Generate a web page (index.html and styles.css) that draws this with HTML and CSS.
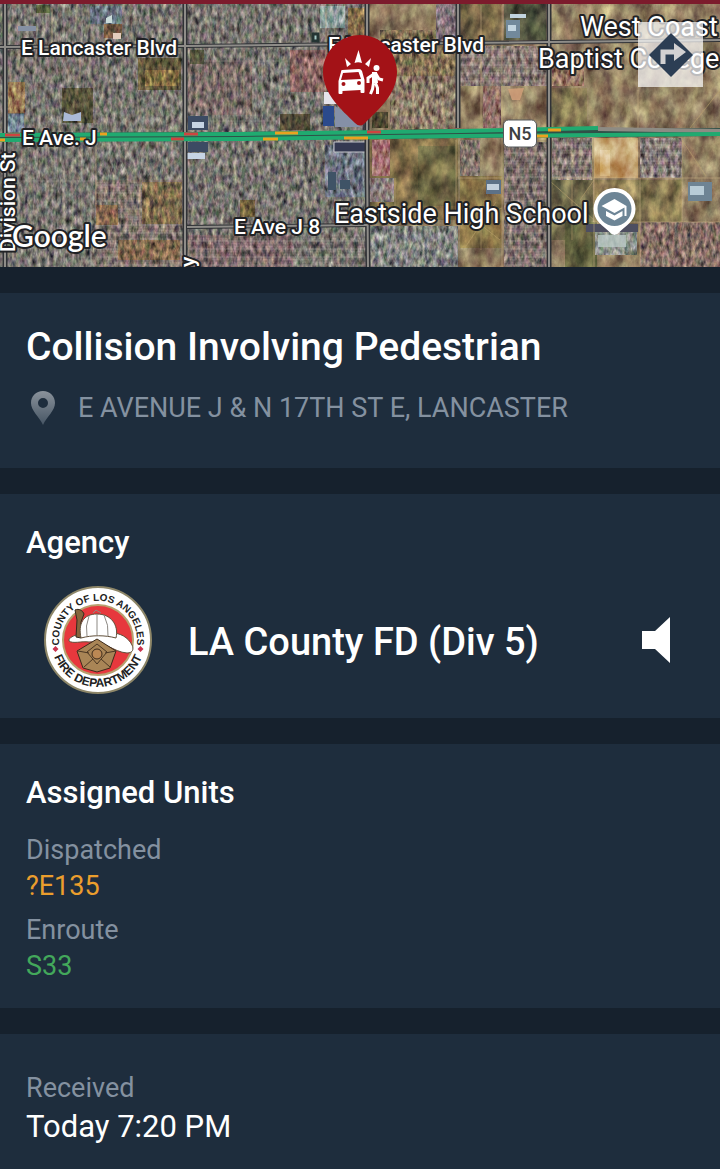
FILE: index.html
```html
<!DOCTYPE html>
<html lang="en">
<head>
  <meta charset="UTF-8">
  <meta name="viewport" content="width=device-width, initial-scale=1.0">
  <title>Incident Details</title>
  <link rel="stylesheet" href="styles.css">
</head>
<body>
  <header class="map">
    <svg class="map-canvas" viewBox="0 4 720 263" preserveAspectRatio="xMidYMid slice" role="img" aria-label="Incident map">
      <defs>
        <filter id="city" x="0" y="0" width="100%" height="100%" color-interpolation-filters="sRGB">
          <feTurbulence type="fractalNoise" baseFrequency="0.24 0.12" numOctaves="3" seed="4"/>
          <feColorMatrix values=".8 .4 .1 0 -.15  .6 .6 .1 0 -.15  .6 .4 .3 0 -.14  0 0 0 0 1" result="noise"/>
          <feBlend in="noise" in2="SourceGraphic" mode="overlay"/>
          <feComposite in2="SourceGraphic" operator="in"/>
        </filter>
        <filter id="field" x="0" y="0" width="100%" height="100%" color-interpolation-filters="sRGB">
          <feTurbulence type="fractalNoise" baseFrequency="0.08 0.05" numOctaves="5" seed="9"/>
          <feColorMatrix values=".6 .4 0 0 0  .5 .5 0 0 0  .5 .4 .1 0 0  0 0 0 0 1" result="noise"/>
          <feBlend in="noise" in2="SourceGraphic" mode="overlay"/>
          <feComposite in2="SourceGraphic" operator="in"/>
        </filter>
        <pattern id="streets" width="9" height="60" patternUnits="userSpaceOnUse">
          <path d="M1 0V60M0 1H9" stroke="#c9c4ba" stroke-width="1" opacity=".28"/>
          <path d="M5 0V60" stroke="#2f3029" stroke-width="1" opacity=".25"/>
        </pattern>
        <pattern id="rows" width="50" height="8" patternUnits="userSpaceOnUse">
          <path d="M0 1H50M1 0V8" stroke="#d0c8bc" stroke-width="1" opacity=".28"/>
          <path d="M0 5H50" stroke="#33302c" stroke-width="1" opacity=".25"/>
        </pattern>
      </defs>

      <!-- open land -->
      <g filter="url(#field)">
        <rect y="4" width="720" height="263" fill="#8e7b5f"/>
        <rect x="368" y="138" width="90" height="82" fill="#7d6b47"/>
        <rect x="418" y="146" width="38" height="60" fill="#6a6442"/>
        <rect x="460" y="176" width="42" height="72" fill="#867247"/>
        <rect x="551" y="180" width="42" height="60" fill="#6d6749"/>
        <rect x="594" y="180" width="88" height="42" fill="#80734e"/>
        <rect x="565" y="222" width="32" height="45" fill="#5f5f3e"/>
        <rect x="504" y="4" width="42" height="36" fill="#5b5d46"/>
        <rect x="460" y="4" width="42" height="38" fill="#7b6a4a"/>
        <rect x="551" y="88" width="36" height="40" fill="#837651"/>
        <rect x="594" y="138" width="44" height="40" fill="#c4a372"/>
        <rect x="600" y="150" width="10" height="26" fill="#d8b985"/>
      </g>

      <!-- built-up blocks -->
      <g filter="url(#city)">
        <rect y="4" width="367" height="263" fill="#77746c"/>
        <rect x="8" y="50" width="90" height="30" fill="#756f68"/>
        <rect x="60" y="100" width="120" height="34" fill="#77756b"/>
        <rect x="95" y="180" width="88" height="87" fill="#7f736a"/>
        <rect x="188" y="235" width="105" height="32" fill="#7d6a68"/>
        <rect x="290" y="50" width="36" height="42" fill="#876660"/>
        <rect x="188" y="60" width="64" height="55" fill="#796b64"/>
        <rect x="390" y="75" width="66" height="54" fill="#8a7a66"/>
        <rect x="380" y="30" width="76" height="46" fill="#837153"/>
        <rect x="436" y="4" width="20" height="38" fill="#84757a"/>
        <rect x="368" y="226" width="90" height="41" fill="#7f817c"/>
        <rect x="372" y="140" width="18" height="36" fill="#a16f6d"/>
        <rect x="368" y="178" width="26" height="24" fill="#897d78"/>
        <rect x="460" y="46" width="88" height="40" fill="#86776f"/>
        <rect x="483" y="86" width="18" height="42" fill="#927167"/>
        <rect x="460" y="140" width="20" height="36" fill="#817468"/>
        <rect x="504" y="142" width="44" height="125" fill="#7d7069"/>
        <rect x="552" y="138" width="40" height="42" fill="#84776f"/>
        <rect x="640" y="138" width="42" height="40" fill="#857a75"/>
        <rect x="552" y="60" width="32" height="26" fill="#94745f"/>
        <rect x="640" y="222" width="80" height="45" fill="#846e63"/>
        <rect x="595" y="225" width="42" height="30" fill="#8d9388"/>
      </g>
      <path d="M8 144H95V267H8zM8 8H98V44H8zM188 8H326V42H188zM188 50H280V128H188z" fill="url(#streets)"/>
      <path d="M96 180H183V267H96zM188 235H366V267H188zM504 140H548V267H504zM552 138H592V178H552zM640 138H682V178H640zM460 46H548V84H460z" fill="url(#rows)"/>

      <!-- parks, lots and large roofs -->
      <g filter="url(#city)">
        <rect x="8" y="82" width="17" height="31" fill="#9a7c55"/>
        <rect x="8" y="114" width="16" height="18" fill="#71818f"/>
        <rect x="62" y="88" width="31" height="35" fill="#56523a"/>
        <rect x="138" y="58" width="43" height="32" fill="#5f563a"/>
        <rect x="145" y="70" width="34" height="16" fill="#857143"/>
        <rect x="104" y="22" width="18" height="16" fill="#705940"/>
        <rect x="90" y="6" width="32" height="18" fill="#68757c"/>
        <rect x="36" y="5" width="14" height="8" fill="#505a3b"/>
        <rect x="190" y="50" width="14" height="14" fill="#54553c"/>
        <rect x="96" y="205" width="22" height="20" fill="#82654a"/>
        <rect x="142" y="182" width="40" height="42" fill="#7d6b4c"/>
        <rect x="118" y="240" width="62" height="20" fill="#82694d"/>
        <rect x="348" y="8" width="18" height="28" fill="#846c49"/>
        <rect x="280" y="114" width="30" height="16" fill="#514a36"/>
        <rect x="372" y="112" width="16" height="16" fill="#504a31"/>
        <rect x="240" y="200" width="15" height="17" fill="#6b5b3a"/>
        <rect x="325" y="145" width="41" height="52" fill="#6d747e"/>
        <rect x="320" y="6" width="25" height="22" fill="#8b9d98"/>
      </g>
      <g>
        <path d="M64 112l8 3 9-3v9H63z" fill="#aab9d6"/>
        <path d="M188 116h20v14h-20zM188 142h20v10h-20z" fill="#3c4b63"/>
        <path d="M192 122h12v6h-12zM187 153h18v6h-18z" fill="#c6d4e4"/>
        <path d="M18 26h18v5H18z" fill="#8590a3"/>
        <path d="M106 18l6-3v8h-6z" fill="#cbdcda"/>
        <path d="M113 33h8v6h-8z" fill="#e3ccbc"/>
        <path d="M324 92h16l4 12h-20z" fill="#e5e3ea"/>
        <path d="M323 106h11v20h-11z" fill="#2b4a8c"/>
        <path d="M335 106l25 17v4h-25z" fill="#8590a7"/>
        <path d="M334 142h32v10h-32z" fill="#343951" stroke="#c5c7cb"/>
        <path d="M328 172h8v18h-8zM340 180h10v9h-10z" fill="#3f5366"/>
        <path d="M313 34h5v7h-5z" fill="#a7c9c6" stroke="#243433" stroke-width="3"/>
        <path d="M506 20h14v18h-14z" fill="#72899b"/>
        <path d="M508 25h8v6h-8zM510 14h16v4h-16z" fill="#c2d4df"/>
        <path d="M486 180h15v14h-15z" fill="#5d7187"/>
        <path d="M487 184h12v6h-12z" fill="#c3d0dd"/>
        <path d="M688 182h24v19h-24z" fill="#6e8494"/>
        <path d="M690 186h14v9h-14z" fill="#b8ccd7"/>
        <path d="M586 224h52v8h-52z" fill="#4d4e60"/>
        <path d="M598 235h28v12h-28z" fill="#bac9c5" opacity=".8"/>
        <path d="M508 89l16-1-4 12h-8z" fill="#d6a27c" opacity=".8"/>
      </g>
      <!-- dirt tracks -->
      <path d="M481 5V128M502 5V267M594 138V267M551 178H720M682 138V222M594 222H720M458 178H502M96 140V204M140 178V226M395 178V222M638 90V128M640 178V267M52 8V44M80 45V86M326 8V92M413 90V130M456 140V220" fill="none" stroke="#c9ae84" stroke-width="1" opacity=".55"/>
      <path d="M460 225L502 208M462 210L500 240M466 246L496 202M481 200V250M551 182L594 220M572 180V240M594 180L580 200M682 140L706 176M720 90L690 128" fill="none" stroke="#c0a670" stroke-width="1" opacity=".5"/>

      <!-- roads -->
      <g fill="none" stroke="#303236" stroke-width="5">
        <path d="M5 4V267M185 4V267M367 4V155L368 267M458 4V128M549 4V267"/>
        <path d="M0 47L185 46L367 44L720 40M187 227L367 225" stroke-width="4"/>
      </g>
      <g fill="none" stroke="#8e8c88" stroke-width="2">
        <path d="M5 4V267M185 4V267M367 4V155L368 267M458 4V128M549 4V267"/>
        <path d="M0 47L185 46L367 44L720 40M187 227L367 225"/>
      </g>

      <!-- live traffic -->
      <path d="M0 137L240 136L460 134L720 132" fill="none" stroke="#2f5148" stroke-width="8"/>
      <g fill="none" stroke-width="4">
        <path d="M0 135L240 134L460 131L598 128" stroke="#20aa70"/>
        <path d="M598 129L720 131" stroke="#8d8b84"/>
        <path d="M0 140L240 139L460 136L720 134" stroke="#20aa70"/>
      </g>
      <g fill="none" stroke-width="3">
        <path d="M5 135H20M184 134H198M171 139H184M367 132H381" stroke="#cf4340"/>
        <path d="M100 134H107M275 133H298M263 139H278M344 138H368M548 130H561M537 136H548M0 140H5M80 139H86" stroke="#eca11f"/>
      </g>

      <!-- labels -->
      <g class="map-label street">
        <text x="21" y="55">E Lancaster Blvd</text>
        <text x="328" y="52">E Lancaster Blvd</text>
        <text x="22" y="145">E Ave. J</text>
        <text x="234" y="234">E Ave J 8</text>
        <text transform="translate(15 252) rotate(-90)">Division St</text>
        <text transform="translate(195 267) rotate(-90)">y</text>
      </g>
      <g class="map-label place">
        <text x="580" y="36">West Coast</text>
        <text x="538" y="68">Baptist College</text>
        <text x="334" y="223">Eastside High School</text>
      </g>
      <text class="map-label google" x="12" y="247">Google</text>

      <rect x="503.500" y="120" width="33" height="27" rx="5" fill="#fff" stroke="#55585a"/>
      <text class="route" x="520" y="140">N5</text>

      <!-- school marker -->
      <path d="M614.500 188a21 21 0 0 0-21 21c0 12 10 17 16 23q5 6 10 0c6-6 16-11 16-23a21 21 0 0 0-21-21z" fill="#fff"/>
      <circle cx="614.500" cy="209" r="17" fill="#6d8596"/>
      <path d="M614.500 199l-13 7 13 7 10-5.500V216h2v-10zM606 211v5l8.500 4.500 8-4.500v-5l-8 4.500z" fill="#fff"/>

      <!-- incident marker -->
      <path d="M360 35c-21 0-37 17-37 37 0 22 19 38 32 51q5 5 10 0c13-13 32-29 32-51 0-20-16-37-37-37z" fill="#a31217"/>
      <g fill="#fff">
        <path d="M358.500 50l3.500 13q-4-1.500-7.500 0zM345 58l6 6-4 3zM371 58l-6 6 4 3z"/>
        <path fill-rule="evenodd" d="M342 70l17-1q2 0 3 2l2.500 9V92q0 1-1 1h-2q-1 0-1-1v-2l-18 1v2q0 1-1 1h-2q-1 0-1-1V81l2.500-9q0-2 1-2zm1 3l-2 7 20-1-2.500-7zM343.500 82a2 2 0 1 0 0 4 2 2 0 0 0 0-4zM359 81a2 2 0 1 0 0 4 2 2 0 0 0 0-4z"/>
        <circle cx="376.500" cy="68" r="3"/>
        <path d="M372 72h5l1 11h-6z"/>
      </g>
      <g fill="none" stroke="#fff" stroke-width="3">
        <path d="M374 74l-6 4v5M376 74l3 5 4 1"/>
        <path d="M373.500 83l-1 6-2 5M375.500 83l2 5v6"/>
      </g>
    </svg>

    <button class="directions" type="button" aria-label="Get directions">
      <svg width="44" height="44" viewBox="0 0 44 44">
        <path d="M22 0l22 22-22 22L0 22z" fill="#2c3e54"/>
        <path d="M14 31V19h13" fill="none" stroke="#d2d1d2" stroke-width="5"/>
        <path d="M25 10l12 9-12 9z" fill="#d2d1d2"/>
      </svg>
    </button>
  </header>

  <main class="sections">
    <section class="card incident">
      <h1>Collision Involving Pedestrian</h1>
      <p class="address">
        <svg class="pin" width="26" height="34" viewBox="0 0 26 34" aria-hidden="true">
          <defs>
            <linearGradient id="pinFill" x1="0" y1="0" x2="0" y2="1">
              <stop offset="0" stop-color="#8a929b"/>
              <stop offset="1" stop-color="#465564"/>
            </linearGradient>
          </defs>
          <path fill="url(#pinFill)" fill-rule="evenodd" d="M13 0C6 0 1 5 1 12c0 8 8 13 12 22 4-9 12-14 12-22C25 5 20 0 13 0zm0 7a5 5 0 1 1 0 10 5 5 0 0 1 0-10z"/>
        </svg>
        <span>E AVENUE J &amp; N 17TH ST E, LANCASTER</span>
      </p>
    </section>

    <section class="card agency">
      <h2>Agency</h2>
      <div class="agency-row">
        <svg class="seal" width="108" height="108" viewBox="0 0 108 108" role="img" aria-label="County of Los Angeles Fire Department">
          <defs>
            <path id="arcTop" d="M15.500 60A39 39 0 1 1 92.500 60"/>
            <path id="arcBottom" d="M7 54A47 47 0 0 0 101 54"/>
          </defs>
          <circle cx="54" cy="54" r="53" fill="#fff" stroke="#8d8668" stroke-width="2"/>
          <circle cx="54" cy="54" r="35" fill="#e7383d" stroke="#b7a06e" stroke-width="2"/>
          <text class="seal-text"><textPath href="#arcTop" startOffset="50%">COUNTY OF LOS ANGELES</textPath></text>
          <text class="seal-text seal-bottom"><textPath href="#arcBottom" startOffset="50%">FIRE DEPARTMENT</textPath></text>
          <path d="M11.500 60l3 3-3 3-3-3zM96.500 60l3 3-3 3-3-3z" fill="#c9334f"/>
          <!-- helmet -->
          <path d="M37 48c-7 1-13 4-12 7 4 3 12 0 20 1 15-2 24 10 38 11 6 0 7-4 5-8-4-8-12-12-20-12z" fill="#fff" stroke="#61503b"/>
          <path d="M31 24c4-2 8 1 9 4l-3 8v16l-5-1 1-17z" fill="#85653d" stroke="#33291d"/>
          <path d="M37 52c-3-14 2-24 16-24s22 11 19 24c-11-3-24-3-35 0z" fill="#fff" stroke="#61503b"/>
          <path d="M45 30q-4 10-2 20M53 28v21M60 29q5 10 4 21M49 27l3-3 5 3" fill="none" stroke="#8c8984"/>
          <!-- badge -->
          <path d="M53 53l19 12-6 17-13 4-14-4-6-17z" fill="#a98556" stroke="#3d2b1b"/>
          <path d="M53 58l10 8-10 12-10-12zM34 65l11 2M72 65l-11 2M40 81l9-8M66 81l-9-8" fill="none" stroke="#4b3723"/>
          <circle cx="53" cy="68" r="5" fill="#bb8854" stroke="#3d2b1b"/>
        </svg>
        <span class="agency-name">LA County FD (Div 5)</span>
        <button class="sound" type="button" aria-label="Listen to agency">
          <svg width="28" height="46" viewBox="0 0 28 46">
            <path d="M0 14h13L28 0v46L13 32H0z" fill="#fff"/>
          </svg>
        </button>
      </div>
    </section>

    <section class="card units">
      <h2>Assigned Units</h2>
      <dl>
        <dt>Dispatched</dt>
        <dd class="dispatched">?E135</dd>
        <dt>Enroute</dt>
        <dd class="enroute">S33</dd>
      </dl>
    </section>

    <section class="card received">
      <dl>
        <dt>Received</dt>
        <dd>Today 7:20 PM</dd>
      </dl>
    </section>
  </main>
</body>
</html>
```
FILE: styles.css
```css
* {
  box-sizing: border-box;
}
body {
  margin: 0;
  min-height: 100vh;
  display: flex;
  flex-direction: column;
  background: #1e2d3d;
  color: #fff;
  font-family: Roboto, sans-serif;
}
h1, h2, p, dl, dd {
  margin: 0;
}
button {
  padding: 0;
  border: none;
  background: none;
  cursor: pointer;
}
svg {
  display: block;
}

/* Map */
.map {
  position: relative;
  border-top: 4px solid #7c1b2c;
}
.map-canvas {
  width: 100%;
  height: 263px;
}
.map-label {
  fill: #fff;
  stroke: #202124;
  stroke-width: 4px;
  stroke-linejoin: round;
  paint-order: stroke;
}
.street {
  font-size: 21px;
  font-weight: 500;
}
.place {
  font-size: 27px;
}
.google {
  font-family: Lato, sans-serif;
  font-size: 30px;
  font-weight: 600;
}
.route {
  fill: #3c4043;
  font-size: 18px;
  font-weight: 500;
  text-anchor: middle;
}
.directions {
  position: absolute;
  top: 18px;
  right: 17px;
  width: 65px;
  height: 65px;
  display: flex;
  align-items: center;
  justify-content: center;
  background: rgba(255, 255, 255, 0.7);
}

/* Sections */
.sections {
  flex: 1;
  display: flex;
  flex-direction: column;
  gap: 26px;
  padding-top: 26px;
  background: #16212d;
}
.card {
  padding: 30px 26px;
  background: #1e2d3d;
}
h1 {
  font-size: 39px;
  line-height: 48px;
  font-weight: 500;
}
h2 {
  font-size: 31px;
  line-height: 38px;
  font-weight: 500;
}
.address {
  display: flex;
  align-items: center;
  gap: 22px;
  margin-top: 16px;
  padding-left: 4px;
  color: #8491a0;
  font-size: 27px;
  line-height: 42px;
}
.incident {
  padding-bottom: 39px;
}
.agency {
  padding-bottom: 24px;
}
.agency-row {
  display: flex;
  align-items: center;
  margin-top: 24px;
  padding: 0 24px 0 18px;
}
.seal-text {
  fill: #222;
  font-family: "Liberation Sans", sans-serif;
  font-size: 10px;
  font-weight: bold;
  text-anchor: middle;
}
.seal-bottom {
  font-size: 12px;
}
.agency-name {
  flex: 1;
  padding: 4px 0 0 36px;
  font-size: 38px;
  line-height: 48px;
  font-weight: 500;
}
dt {
  color: #8491a0;
  font-size: 27px;
  line-height: 36px;
}
dd {
  font-size: 27px;
  line-height: 36px;
}
.units dl {
  margin-top: 20px;
}
.units dd {
  margin-bottom: 8px;
}
.units {
  padding-bottom: 16px;
}
.dispatched {
  color: #eb9e2d;
}
.enroute {
  color: #43a85b;
}
.received {
  flex: 1;
  padding-top: 36px;
}
.received dd {
  font-size: 31px;
  line-height: 42px;
}
```
